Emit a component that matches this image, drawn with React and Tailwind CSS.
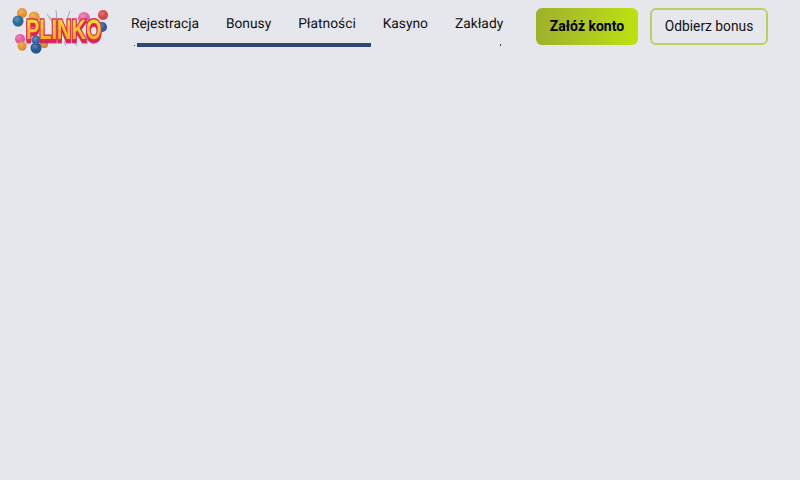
import React from 'react';

const links = ['Rejestracja', 'Bonusy', 'Płatności', 'Kasyno', 'Zakłady'];

const balls = [
    { cx: 22, cy: 10, r: 5, fill: '#e8912a' },
    { cx: 18, cy: 18, r: 5.5, fill: '#22689a' },
    { cx: 34, cy: 14, r: 5.5, fill: '#e9972c' },
    { cx: 84, cy: 15, r: 6, fill: '#e65fa5' },
    { cx: 103, cy: 12, r: 5, fill: '#d8413f' },
    { cx: 102, cy: 24, r: 5, fill: '#2459a8' },
    { cx: 20, cy: 36, r: 5, fill: '#e6529e' },
    { cx: 22, cy: 43, r: 4.5, fill: '#e8912a' },
    { cx: 44, cy: 41, r: 4, fill: '#d98a2a' },
    { cx: 36, cy: 45, r: 5.5, fill: '#1f4f95' },
    { cx: 36, cy: 37, r: 4.5, fill: '#2a63a8' },
];

function Logo() {
    return (
        <svg width="100" height="54" viewBox="10 0 100 54" className="shrink-0 blur-[0.3px]">
            <defs>
                <linearGradient id="plinkoFill" x1="0" y1="0" x2="0" y2="1">
                    <stop offset="0" stopColor="#ffe52e" />
                    <stop offset="1" stopColor="#fb9f1e" />
                </linearGradient>
                <radialGradient id="ballShade" cx="0.4" cy="0.35" r="0.7">
                    <stop offset="0" stopColor="#ffffff" stopOpacity="0.3" />
                    <stop offset="0.6" stopColor="#ffffff" stopOpacity="0" />
                    <stop offset="1" stopColor="#000000" stopOpacity="0.3" />
                </radialGradient>
            </defs>
            <g stroke="#8a8f9c" strokeWidth="1" opacity="0.7">
                <path d="M50 14l4 6M56 7l1 11M70 8l-4 11M47 11l5 8M64 38l2 5M74 38l3 5" />
            </g>
            {balls.map((ball) => (
                <g key={`${ball.cx}-${ball.cy}`}>
                    <circle cx={ball.cx} cy={ball.cy} r={ball.r} fill={ball.fill} />
                    <circle cx={ball.cx} cy={ball.cy} r={ball.r} fill="url(#ballShade)" />
                </g>
            ))}
            <text
                transform="translate(26 36) scale(1 1.4)"
                fontFamily="Liberation Sans, sans-serif"
                fontSize="20"
                fontWeight="700"
                fill="url(#plinkoFill)"
                stroke="#e02a55"
                strokeWidth="2"
                paintOrder="stroke"
                className="drop-shadow-[0_2px_0_#d61f5c]"
            >
                PLINKO
            </text>
        </svg>
    );
}

export default function App() {
    return (
        <div className="min-h-screen bg-[#e5e7ed] font-['Roboto',sans-serif] [text-rendering:geometricPrecision]">
            <header className="flex items-start pl-[10px] pt-[3px]">
                <Logo />
                <nav className="ml-[21px] flex w-[375px] shrink-0 flex-col">
                    <ul className="flex gap-[26.9px] pt-[13px]">
                        {links.map((link) => (
                            <li key={link} className="text-[13.8px] leading-[17px] text-[#111]">
                                <a href="#">{link}</a>
                            </li>
                        ))}
                    </ul>
                    <div className="mt-[10px] flex h-1 w-[371px] items-center pl-[3px]">
                        <div className="h-[1px] w-[1px] bg-[#2f4673]" />
                        <div className="ml-[2px] h-1 w-[234px] bg-[#2f4673]" />
                        <div className="ml-auto mr-[1px] h-[2px] w-[1px] bg-[#2f4673]" />
                    </div>
                </nav>
                <div className="ml-[30px] mt-[5px] flex gap-3">
                    <button className="h-[37px] w-[102px] rounded-md bg-gradient-to-r from-[#9fb02a] to-[#bde20c] text-[14px] font-bold text-black">
                        Załóż konto
                    </button>
                    <button className="h-[37px] w-[118px] rounded-md border-2 border-[#b8d060] text-[13.8px] text-[#111]">
                        Odbierz bonus
                    </button>
                </div>
            </header>
        </div>
    );
}
